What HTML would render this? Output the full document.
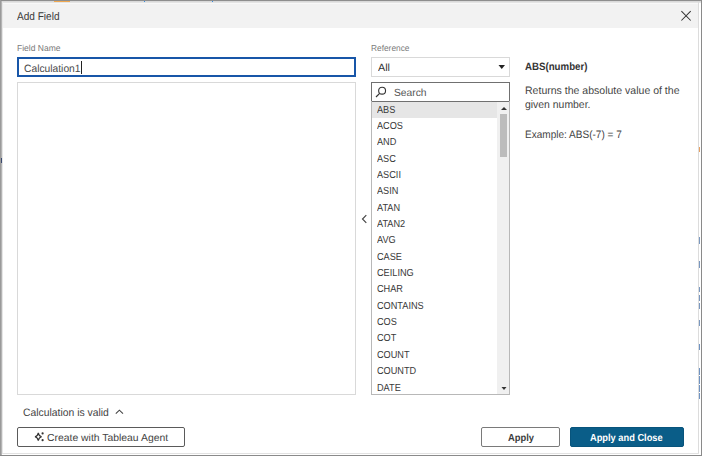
<!DOCTYPE html>
<html><head><meta charset="utf-8">
<style>
*{margin:0;padding:0;box-sizing:border-box}
html,body{width:702px;height:456px;overflow:hidden;background:#fff}
body{position:relative;font-family:"Liberation Sans",sans-serif;color:#333;text-rendering:geometricPrecision}
.a{position:absolute}
.t{position:absolute;white-space:nowrap;line-height:1;transform-origin:0 0}
.b{font-weight:bold}
</style></head><body>
<div class="a" style="left:0px;top:0px;width:702px;height:1px;background:#8e8e8e"></div>
<div class="a" style="left:0px;top:1px;width:702px;height:1px;background:#d9d9d9"></div>
<div class="a" style="left:0px;top:2px;width:702px;height:1px;background:#e4e4e4"></div>
<div class="a" style="left:54px;top:1px;width:16px;height:1px;background:#f0a850"></div>
<div class="a" style="left:144px;top:1px;width:1px;height:1px;background:#3a8ee0"></div>
<div class="a" style="left:212px;top:1px;width:1px;height:1px;background:#3a8ee0"></div>
<div class="a" style="left:0px;top:0px;width:1px;height:456px;background:#9a9a9a"></div>
<div class="a" style="left:1px;top:1px;width:1px;height:455px;background:#b4b4b4"></div>
<div class="a" style="left:1px;top:158px;width:1px;height:5px;background:#3a4a70"></div>
<div class="a" style="left:2px;top:2px;width:1px;height:452px;background:#e6e6e6"></div>
<div class="a" style="left:701px;top:0px;width:1px;height:456px;background:#8a8a8a"></div>
<div class="a" style="left:698px;top:2px;width:1px;height:452px;background:#dcdcdc"></div>
<div class="a" style="left:699px;top:344px;width:1px;height:6px;background:#6f93c2"></div>
<div class="a" style="left:699px;top:368px;width:1px;height:7px;background:#6f93c2"></div>
<div class="a" style="left:699px;top:376px;width:1px;height:8px;background:#6f93c2"></div>
<div class="a" style="left:699px;top:385px;width:1px;height:7px;background:#6f93c2"></div>
<div class="a" style="left:699px;top:393px;width:1px;height:6px;background:#6f93c2"></div>
<div class="a" style="left:699px;top:237px;width:1px;height:7px;background:#7a98c0"></div>
<div class="a" style="left:699px;top:261px;width:1px;height:7px;background:#7a98c0"></div>
<div class="a" style="left:699px;top:287px;width:1px;height:5px;background:#7a98c0"></div>
<div class="a" style="left:699px;top:295px;width:1px;height:6px;background:#7a98c0"></div>
<div class="a" style="left:699px;top:303px;width:1px;height:6px;background:#7a98c0"></div>
<div class="a" style="left:699px;top:320px;width:1px;height:6px;background:#7a98c0"></div>
<div class="a" style="left:699px;top:147px;width:1px;height:5px;background:#e8a060"></div>
<div class="a" style="left:0px;top:455px;width:702px;height:1px;background:#8a8a8a"></div>
<div class="a" style="left:2px;top:453px;width:697px;height:1px;background:#e2e2e2"></div>
<div class="a" style="left:3px;top:3px;width:695px;height:25px;background:#f2f2f2"></div>
<div class="a" style="left:3px;top:3px;width:695px;height:1px;background:#f8f8f8"></div>
<div class="t" style="left:17px;top:11.52px;font-size:11.2px;color:#3a3a3a;transform:scaleX(0.9);">Add Field</div>
<svg class="a" style="left:680px;top:9px" width="13" height="13" viewBox="0 0 13 13"><path d="M1.4 2.2L10.7 11.5M10.7 2.2L1.4 11.5" stroke="#333" stroke-width="1.05" fill="none"/></svg>
<div class="t" style="left:17px;top:43.84px;font-size:8.7px;color:#7a7a7a;transform:scaleX(0.98);">Field Name</div>
<div class="a" style="left:17px;top:57px;width:339px;height:20px;border:2px solid #1856a8"></div>
<div class="t" style="left:24px;top:64.43px;font-size:10.6px;color:#4a4a4a;transform:scaleX(0.97);">Calculation1</div>
<div class="a" style="left:81px;top:61px;width:1px;height:13px;background:#222"></div>
<div class="a" style="left:17px;top:82px;width:339px;height:313px;border:1px solid #d9d9d9"></div>
<svg class="a" style="left:360px;top:213px" width="9" height="12" viewBox="0 0 9 12"><path d="M6.3 2.2L2.5 6L6.3 9.8" stroke="#444" stroke-width="1.15" fill="none"/></svg>
<div class="t" style="left:371px;top:43.84px;font-size:8.7px;color:#7a7a7a;transform:scaleX(0.96);">Reference</div>
<div class="a" style="left:371px;top:57px;width:139px;height:20px;border:1px solid #d9d9d9"></div>
<div class="t" style="left:378px;top:64.40px;font-size:10.4px;color:#333;transform:scaleX(1.04);">All</div>
<svg class="a" style="left:498px;top:64px" width="8" height="6" viewBox="0 0 8 6"><path d="M0.5 1L7 1L3.75 5Z" fill="#222"/></svg>
<div class="a" style="left:371px;top:82px;width:139px;height:20px;border:1px solid #707070"></div>
<svg class="a" style="left:375px;top:86px" width="12" height="12" viewBox="0 0 12 12"><circle cx="7.1" cy="4.7" r="3.45" stroke="#333" stroke-width="1.1" fill="none"/><path d="M4.4 7.6L1 11" stroke="#333" stroke-width="1.2"/></svg>
<div class="t" style="left:394px;top:88.60px;font-size:10.4px;color:#555;transform:scaleX(0.99);">Search</div>
<div class="a" style="left:371px;top:101px;width:139px;height:294px;border:1px solid #b8b8b8;border-top:none"></div>
<div class="a" style="left:372px;top:102px;width:125px;height:16px;background:#e6e6e6"></div>
<div class="a" style="left:497px;top:102px;width:12px;height:292px;background:#f0f0f0"></div>
<svg class="a" style="left:500px;top:106px" width="8" height="5" viewBox="0 0 8 5"><path d="M1 4L7 4L4 1Z" fill="#333"/></svg>
<div class="a" style="left:500px;top:114px;width:7px;height:43px;background:#bcbcbc"></div>
<svg class="a" style="left:500px;top:386px" width="8" height="5" viewBox="0 0 8 5"><path d="M1.5 1L6.5 1L4 4Z" fill="#333"/></svg>
<div class="t" style="left:377px;top:105.57px;font-size:10.2px;color:#3a3a3a;transform:scaleX(0.9);">ABS</div>
<div class="t" style="left:377px;top:121.92px;font-size:10.2px;color:#3a3a3a;transform:scaleX(0.9);">ACOS</div>
<div class="t" style="left:377px;top:138.27px;font-size:10.2px;color:#3a3a3a;transform:scaleX(0.9);">AND</div>
<div class="t" style="left:377px;top:154.62px;font-size:10.2px;color:#3a3a3a;transform:scaleX(0.9);">ASC</div>
<div class="t" style="left:377px;top:170.97px;font-size:10.2px;color:#3a3a3a;transform:scaleX(0.9);">ASCII</div>
<div class="t" style="left:377px;top:187.32px;font-size:10.2px;color:#3a3a3a;transform:scaleX(0.9);">ASIN</div>
<div class="t" style="left:377px;top:203.67px;font-size:10.2px;color:#3a3a3a;transform:scaleX(0.9);">ATAN</div>
<div class="t" style="left:377px;top:220.02px;font-size:10.2px;color:#3a3a3a;transform:scaleX(0.9);">ATAN2</div>
<div class="t" style="left:377px;top:236.37px;font-size:10.2px;color:#3a3a3a;transform:scaleX(0.9);">AVG</div>
<div class="t" style="left:377px;top:252.72px;font-size:10.2px;color:#3a3a3a;transform:scaleX(0.9);">CASE</div>
<div class="t" style="left:377px;top:269.07px;font-size:10.2px;color:#3a3a3a;transform:scaleX(0.9);">CEILING</div>
<div class="t" style="left:377px;top:285.42px;font-size:10.2px;color:#3a3a3a;transform:scaleX(0.9);">CHAR</div>
<div class="t" style="left:377px;top:301.77px;font-size:10.2px;color:#3a3a3a;transform:scaleX(0.9);">CONTAINS</div>
<div class="t" style="left:377px;top:318.12px;font-size:10.2px;color:#3a3a3a;transform:scaleX(0.9);">COS</div>
<div class="t" style="left:377px;top:334.47px;font-size:10.2px;color:#3a3a3a;transform:scaleX(0.9);">COT</div>
<div class="t" style="left:377px;top:350.82px;font-size:10.2px;color:#3a3a3a;transform:scaleX(0.9);">COUNT</div>
<div class="t" style="left:377px;top:367.17px;font-size:10.2px;color:#3a3a3a;transform:scaleX(0.9);">COUNTD</div>
<div class="t" style="left:377px;top:383.52px;font-size:10.2px;color:#3a3a3a;transform:scaleX(0.9);">DATE</div>
<div class="t b" style="left:525px;top:61.73px;font-size:10.6px;color:#333;transform:scaleX(0.915);">ABS(number)</div>
<div class="t" style="left:525px;top:85.66px;font-size:10.8px;color:#444;transform:scaleX(0.975);">Returns the absolute value of the</div>
<div class="t" style="left:525px;top:99.86px;font-size:10.8px;color:#444;transform:scaleX(0.965);">given number.</div>
<div class="t" style="left:525px;top:129.86px;font-size:10.8px;color:#444;transform:scaleX(0.93);">Example: ABS(-7) = 7</div>
<div class="t" style="left:23px;top:408.06px;font-size:10.8px;color:#444;transform:scaleX(0.96);">Calculation is valid</div>
<svg class="a" style="left:114px;top:407px" width="11" height="10" viewBox="0 0 11 10"><path d="M1.8 6.6L5.4 3.2L9 6.6" stroke="#444" stroke-width="1.1" fill="none"/></svg>
<div class="a" style="left:17px;top:427px;width:168px;height:20px;border:1px solid #5a5a5a;border-radius:2px"></div>
<svg class="a" style="left:34px;top:431px" width="12" height="12" viewBox="0 0 12 12"><path d="M4.3 1.8Q4.8 5 7.6 5.7Q4.8 6.4 4.3 9.6Q3.8 6.4 1 5.7Q3.8 5 4.3 1.8Z" stroke="#333" stroke-width="1.15" fill="none"/><circle cx="8.6" cy="2.4" r="1.1" fill="#333"/><circle cx="8.6" cy="9.2" r="1.1" fill="#333"/></svg>
<div class="t" style="left:47px;top:433.97px;font-size:10.2px;color:#444;transform:scaleX(1.02);">Create with Tableau Agent</div>
<div class="a" style="left:481px;top:427px;width:79px;height:20px;border:1px solid #7a7a7a;border-radius:2px"></div>
<div class="t b" style="left:508px;top:434.37px;font-size:10.2px;color:#3c3c3c;transform:scaleX(0.92);">Apply</div>
<div class="a" style="left:570px;top:427px;width:114px;height:20px;background:#0a5d88;border:1px solid #08547c;border-radius:2px"></div>
<div class="t b" style="left:590px;top:434.37px;font-size:10.2px;color:#fff;transform:scaleX(0.91);">Apply and Close</div>
</body></html>
